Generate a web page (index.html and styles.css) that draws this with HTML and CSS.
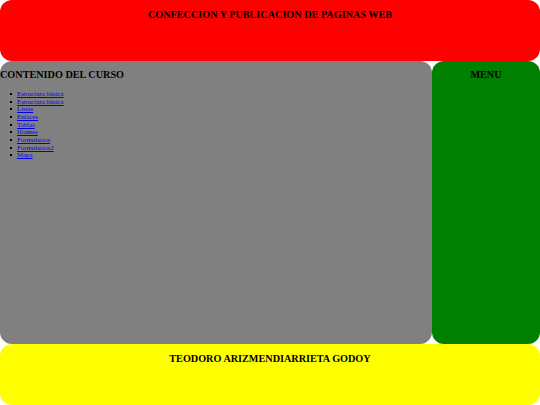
FILE: index.html
```html
<!DOCTYPE html>
<html lang="es">
<head>
<meta charset="utf-8">
<title>Curso</title>
<link rel="stylesheet" href="styles.css">
</head>
<body>
<div class="page">
  <header class="header"><h1 class="title">CONFECCION Y PUBLICACION DE PAGINAS WEB</h1></header>
  <main class="content">
    <h2 class="section-title">CONTENIDO DEL CURSO</h2>
    <ul class="links">
      <li><a href="#">Estructura básica</a></li>
      <li><a href="#">Estructura básica</a></li>
      <li><a href="#">Listas</a></li>
      <li><a href="#">Enlaces</a></li>
      <li><a href="#">Tablas</a></li>
      <li><a href="#">Iframes</a></li>
      <li><a href="#">Formularios</a></li>
      <li><a href="#">Formularios2</a></li>
      <li><a href="#">Mapa</a></li>
    </ul>
  </main>
  <aside class="menu"><h2 class="menu-title">MENU</h2></aside>
  <footer class="footer"><h2 class="footer-title">TEODORO ARIZMENDIARRIETA GODOY</h2></footer>
</div>
</body>
</html>
```
FILE: styles.css
```css
html, body { margin: 0; padding: 0; }
body { font-family: "Liberation Serif", "Times New Roman", serif; color: #000; }
.page {
  display: grid;
  grid-template-columns: 432px 108px;
  grid-template-rows: 61px 283px 61px;
  width: 540px;
  height: 405px;
}
.header { grid-column: 1 / 3; background: #ff0000; border-radius: 12px; text-align: center; overflow: hidden; }
.title { font-size: 10.2px; margin: 8px 0 0; line-height: 13px; }
.content { background: #808080; border-radius: 12px; overflow: hidden; }
.section-title { font-size: 10.2px; margin: 7px 0 0; line-height: 13px; }
.links { margin: 9px 0 0; padding-left: 17px; font-size: 6.8px; line-height: 7.65px; list-style: none; }
.links li { position: relative; }
.links li::before {
  content: "";
  position: absolute;
  left: -7px;
  top: 3px;
  width: 2px;
  height: 2px;
  background: #000;
}
.links a { color: #0000ee; }
.menu { background: #008000; border-radius: 12px; text-align: center; }
.menu-title { font-size: 10.2px; margin: 7px 0 0; line-height: 13px; }
.footer { grid-column: 1 / 3; background: #ffff00; border-radius: 12px; text-align: center; }
.footer-title { font-size: 10.2px; margin: 8px 0 0; line-height: 13px; }
```
